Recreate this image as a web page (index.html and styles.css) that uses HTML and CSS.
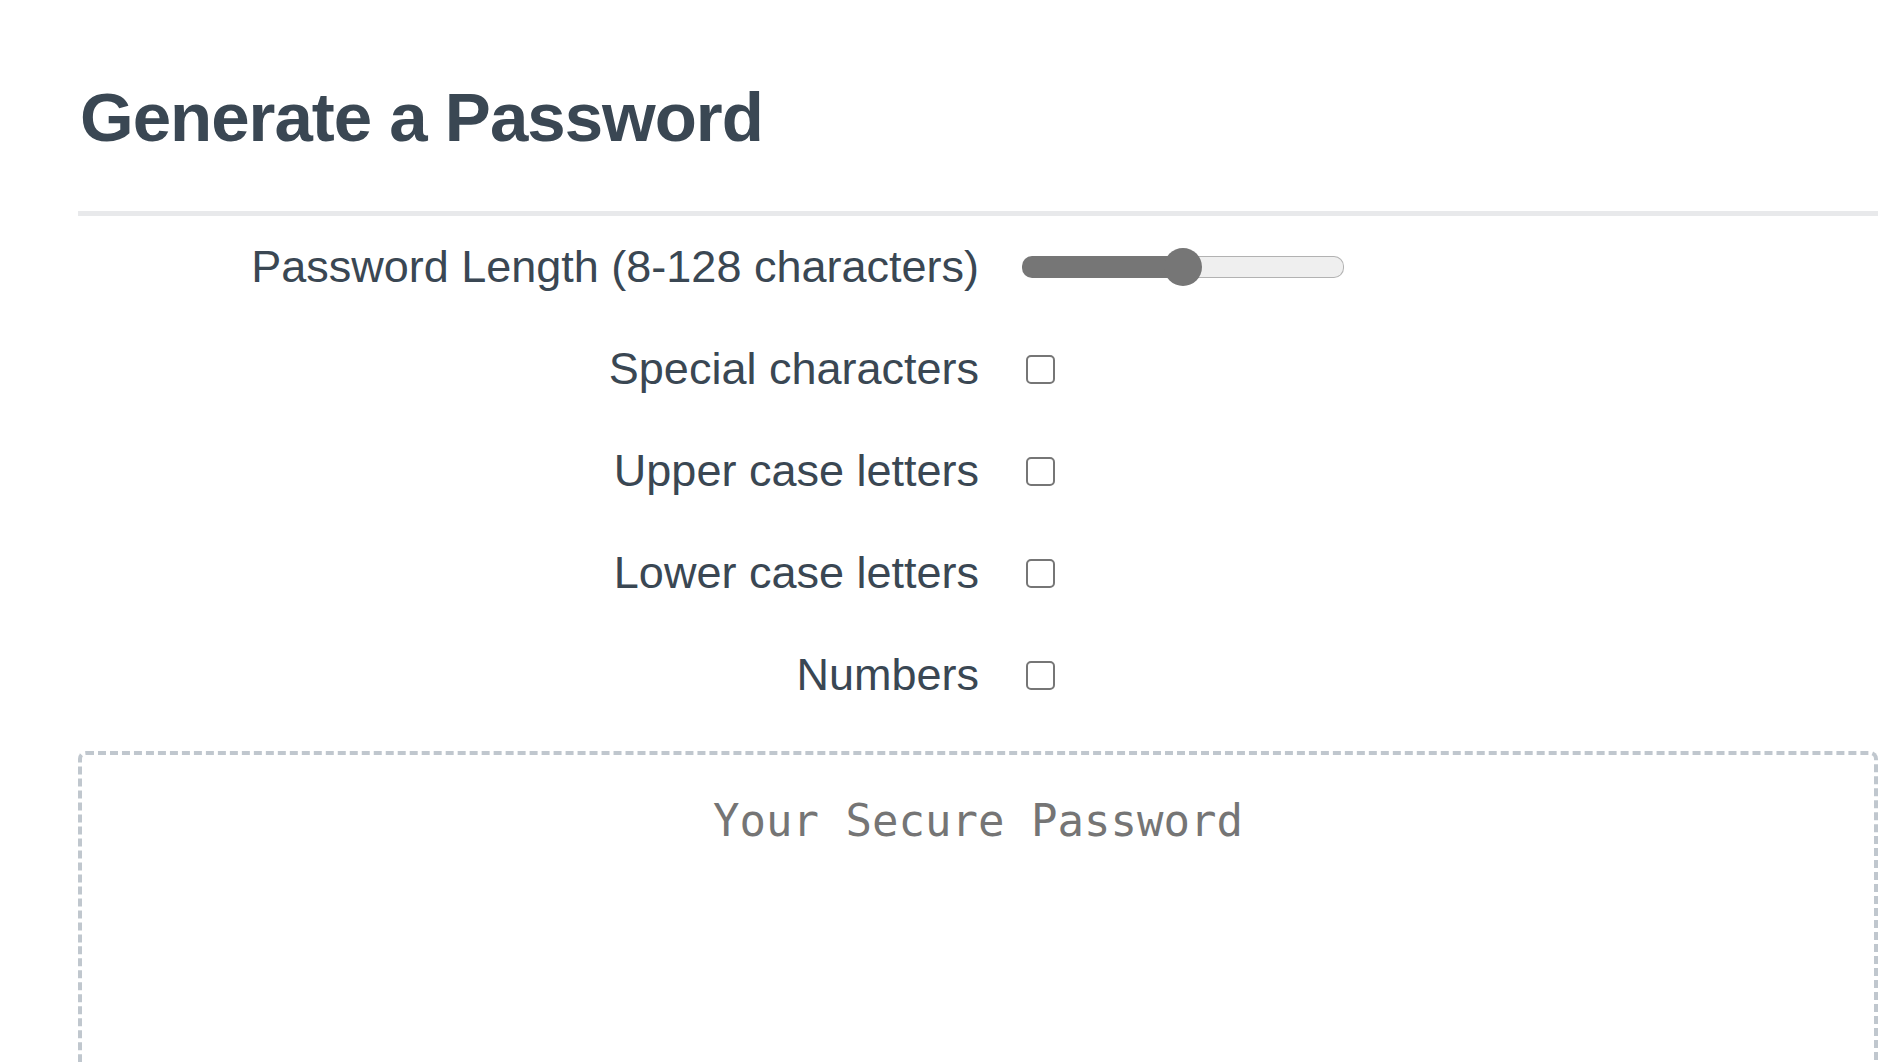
FILE: index.html
```html
<!DOCTYPE html>
<html lang="en">
<head>
<meta charset="utf-8">
<title>Password Generator</title>
<link rel="stylesheet" href="styles.css">
</head>
<body>
<main class="page">
  <h1 class="title">Generate a Password</h1>
  <div class="rule"></div>
  <form class="options">
    <div class="row">
      <label class="label" for="length">Password Length (8-128 characters)</label>
      <div class="control"><input class="range" id="length" type="range" min="8" max="128" value="68"></div>
    </div>
    <div class="row">
      <label class="label" for="special">Special characters</label>
      <div class="control"><input class="check" id="special" type="checkbox"></div>
    </div>
    <div class="row">
      <label class="label" for="upper">Upper case letters</label>
      <div class="control"><input class="check" id="upper" type="checkbox"></div>
    </div>
    <div class="row">
      <label class="label" for="lower">Lower case letters</label>
      <div class="control"><input class="check" id="lower" type="checkbox"></div>
    </div>
    <div class="row">
      <label class="label" for="numbers">Numbers</label>
      <div class="control"><input class="check" id="numbers" type="checkbox"></div>
    </div>
  </form>
  <div class="output">
    <div class="placeholder">Your Secure Password</div>
  </div>
</main>
</body>
</html>
```

FILE: styles.css
```css
html, body {
  margin: 0;
  padding: 0;
  background: #ffffff;
}

body {
  font-family: "Liberation Sans", Arial, Helvetica, sans-serif;
  color: #3a4753;
  overflow: hidden;
}

.page {
  padding: 0 10px 0 78px;
}

.title {
  margin: 76px 0 0 2px;
  font-size: 69px;
  line-height: 83px;
  font-weight: 700;
  letter-spacing: -1px;
  color: #3a4753;
}

.rule {
  margin-top: 52px;
  height: 5px;
  background: #e8e9eb;
}

.options {
  display: flex;
  flex-direction: column;
}

.row {
  display: grid;
  grid-template-columns: 901px 1fr;
  column-gap: 43px;
  align-items: center;
  height: 102px;
}

.label {
  text-align: right;
  font-size: 45px;
  line-height: 1.15;
  white-space: nowrap;
}

.control {
  display: flex;
  align-items: center;
}

.range {
  -webkit-appearance: none;
  appearance: none;
  margin: 0;
  width: 320px;
  height: 20px;
  border: 1px solid transparent;
  border-radius: 10px;
  background:
    linear-gradient(to right, #767676 50%, transparent 50%) border-box,
    linear-gradient(#efefef, #efefef) padding-box,
    linear-gradient(#b2b2b2, #b2b2b2) border-box;
  outline: none;
}

.range::-webkit-slider-thumb {
  -webkit-appearance: none;
  appearance: none;
  width: 38px;
  height: 38px;
  border-radius: 50%;
  background: #767676;
  border: none;
}

.check {
  -webkit-appearance: none;
  appearance: none;
  margin: 0 0 0 4px;
  width: 29px;
  height: 29px;
  border: 2px solid #767676;
  border-radius: 5px;
  background: #ffffff;
}

.output {
  margin-top: 25px;
  height: 420px;
  border: 4px dashed #c0c7ce;
  border-radius: 8px;
  padding-top: 40px;
  box-sizing: border-box;
}

.placeholder {
  text-align: center;
  font-family: "DejaVu Sans Mono", "Liberation Mono", monospace;
  font-size: 44px;
  color: #757575;
}
```
